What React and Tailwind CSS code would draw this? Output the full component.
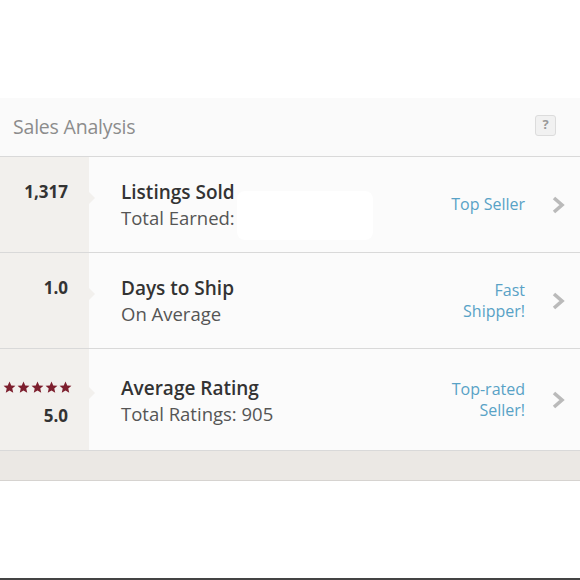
import React from 'react';

const rows = [
  {
    value: '1,317',
    title: 'Listings Sold',
    sub: 'Total Earned:',
    badge: ['Top Seller'],
    hidden: true,
    h: 'h-[96px]',
  },
  {
    value: '1.0',
    title: 'Days to Ship',
    sub: 'On Average',
    badge: ['Fast', 'Shipper!'],
    h: 'h-[96px]',
  },
  {
    value: '5.0',
    title: 'Average Rating',
    sub: 'Total Ratings: 905',
    badge: ['Top-rated', 'Seller!'],
    stars: true,
    h: 'h-[102px]',
  },
];

const Star = () => (
  <svg viewBox="0 0 24 24" className="w-[13px] h-[13px]" fill="#7d1f2e">
    <path d="M12 1l3.2 7.2 7.8.7-5.9 5.1 1.8 7.7L12 17.6l-6.9 4.1 1.8-7.7L1 8.9l7.8-.7z" />
  </svg>
);

const Chevron = () => (
  <svg viewBox="0 0 14 18" className="w-[14px] h-[18px]" fill="none" stroke="#bababa" strokeWidth="3.6">
    <path d="M3 2l8 7-8 7" />
  </svg>
);

const App = () => {
  return (
    <div className="w-[580px] h-[580px] bg-white relative font-['Open_Sans',sans-serif] overflow-hidden">
      <div className="h-[98px]" />

      {/* Header */}
      <div className="h-[59px] bg-[#fafafa] flex items-center justify-between pl-[13px] pr-[24px] border-b border-[#d9d9d9]">
        <span className="text-[19.5px] text-[#8c8c8c] tracking-[-0.2px]">Sales Analysis</span>
        <span className="w-[21px] h-[21px] mt-[-4px] rounded-[3px] border border-[#dcdcdc] bg-[#f1f1f1] flex items-center justify-center text-[13px] font-bold text-[#999]">?</span>
      </div>

      {/* Rows */}
      {rows.map((r, i) => (
        <div key={i} className={`flex ${r.h} border-b border-[#d9d9d9]`}>
          <div className="w-[89px] bg-[#f2f0ed] flex flex-col justify-center items-end pr-[21px] relative">
            {r.stars ? (
              <div className="h-[25px] flex items-center gap-[1px] mr-[-4px] mt-[4px]">
                <Star />
                <Star />
                <Star />
                <Star />
                <Star />
              </div>
            ) : (
              <span className="h-[25px] mt-[-2px] text-[17px] font-bold text-[#333] leading-[25px]">{r.value}</span>
            )}
            {r.stars ? (
              <span className="h-[25px] mt-[3px] text-[17px] font-bold text-[#333] leading-[25px]">{r.value}</span>
            ) : (
              <span className="h-[25px]" />
            )}
            <span className="absolute right-[-6px] top-[calc(50%-13px)] w-0 h-0 border-y-[6px] border-y-transparent border-l-[6px] border-l-[#f2f0ed]" />
          </div>
          <div className="flex-1 bg-[#fbfbfb] flex items-center pl-[32px] pr-[15px]">
            <div className={`flex-1 relative ${r.stars ? 'mt-[3px]' : ''}`}>
              <div className="text-[19px] font-semibold text-[#333] leading-[25px]">{r.title}</div>
              <div className="text-[18.5px] text-[#555] leading-[25px]">{r.sub}</div>
              {r.hidden && (
                <div className="absolute left-[116px] top-[11px] w-[136px] h-[49px] rounded-[8px] bg-white" />
              )}
            </div>
            <div className="flex items-center gap-[26px]">
              <div className="text-right text-[16px] text-[#58a2c6] leading-[21px]">
                {r.badge.map((b) => (
                  <div key={b}>{b}</div>
                ))}
              </div>
              <Chevron />
            </div>
          </div>
        </div>
      ))}

      {/* Footer band */}
      <div className="h-[30px] bg-[#ebe8e4] border-b border-[#d6d3d0]" />

      <div className="absolute bottom-0 left-0 right-0 h-[2px] bg-[#444]" />
    </div>
  );
};

export default App;
